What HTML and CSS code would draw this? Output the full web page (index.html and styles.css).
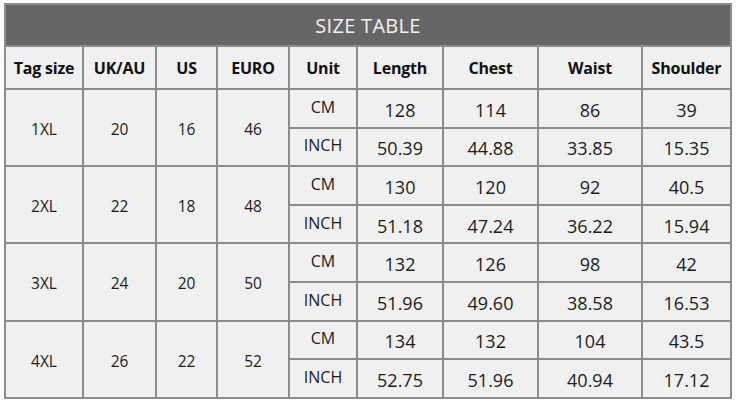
FILE: index.html
```
<!DOCTYPE html>
<html>
<head>
<meta charset="utf-8">
<link rel="stylesheet" href="styles.css">
</head>
<body>
<div class="wrap">
<table class="size-table">
  <colgroup>
    <col class="c1"><col class="c2"><col class="c3"><col class="c4"><col class="c5"><col class="c6"><col class="c7"><col class="c8"><col class="c9">
  </colgroup>
  <thead>
    <tr class="title-row"><th colspan="9">SIZE TABLE</th></tr>
    <tr class="head-row">
      <th>Tag size</th><th>UK/AU</th><th>US</th><th>EURO</th><th>Unit</th><th>Length</th><th>Chest</th><th>Waist</th><th>Shoulder</th>
    </tr>
  </thead>
  <tbody>
    <tr><td rowspan="2" class="sm">1XL</td><td rowspan="2" class="sm">20</td><td rowspan="2" class="sm">16</td><td rowspan="2" class="sm">46</td><td class="unit">CM</td><td>128</td><td>114</td><td>86</td><td>39</td></tr>
    <tr><td class="unit">INCH</td><td>50.39</td><td>44.88</td><td>33.85</td><td>15.35</td></tr>
    <tr><td rowspan="2" class="sm">2XL</td><td rowspan="2" class="sm">22</td><td rowspan="2" class="sm">18</td><td rowspan="2" class="sm">48</td><td class="unit">CM</td><td>130</td><td>120</td><td>92</td><td>40.5</td></tr>
    <tr><td class="unit">INCH</td><td>51.18</td><td>47.24</td><td>36.22</td><td>15.94</td></tr>
    <tr><td rowspan="2" class="sm">3XL</td><td rowspan="2" class="sm">24</td><td rowspan="2" class="sm">20</td><td rowspan="2" class="sm">50</td><td class="unit">CM</td><td>132</td><td>126</td><td>98</td><td>42</td></tr>
    <tr><td class="unit">INCH</td><td>51.96</td><td>49.60</td><td>38.58</td><td>16.53</td></tr>
    <tr><td rowspan="2" class="sm">4XL</td><td rowspan="2" class="sm">26</td><td rowspan="2" class="sm">22</td><td rowspan="2" class="sm">52</td><td class="unit">CM</td><td>134</td><td>132</td><td>104</td><td>43.5</td></tr>
    <tr><td class="unit">INCH</td><td>52.75</td><td>51.96</td><td>40.94</td><td>17.12</td></tr>
  </tbody>
</table>
</div>
</body>
</html>
```
FILE: styles.css
```
html, body {
  margin: 0;
  padding: 0;
  background: #ffffff;
}
.wrap {
  padding: 3px 0 0 4px;
}
.size-table {
  border-collapse: collapse;
  table-layout: fixed;
  width: 726px;
  font-family: "Open Sans", "Noto Sans", sans-serif;
  color: #1c1c1c;
  background: #f0f0f0;
}
.c1 { width: 78px; }
.c2 { width: 73px; }
.c3 { width: 61px; }
.c4 { width: 72px; }
.c5 { width: 68px; }
.c6 { width: 86px; }
.c7 { width: 95px; }
.c8 { width: 104px; }
.c9 { width: 89px; }
.size-table th,
.size-table td {
  border: 2px solid #8c8c8c;
  text-align: center;
  vertical-align: middle;
  padding: 0;
}
.title-row th {
  background: #666666;
  color: #f2f2f2;
  font-weight: 400;
  font-size: 20px;
  height: 40px;
  letter-spacing: 0.3px;
}
.head-row th {
  font-weight: 700;
  font-size: 16px;
  letter-spacing: -0.2px;
  color: #111111;
  height: 41px;
}
.size-table td {
  font-size: 18px;
  height: 38.6px;
  line-height: 20px;
  padding-top: 3px;
  box-sizing: border-box;
}
.size-table td.sm {
  font-size: 15.5px;
}
.size-table td.unit {
  font-size: 16px;
  padding-top: 0;
  padding-bottom: 3px;
}
```
